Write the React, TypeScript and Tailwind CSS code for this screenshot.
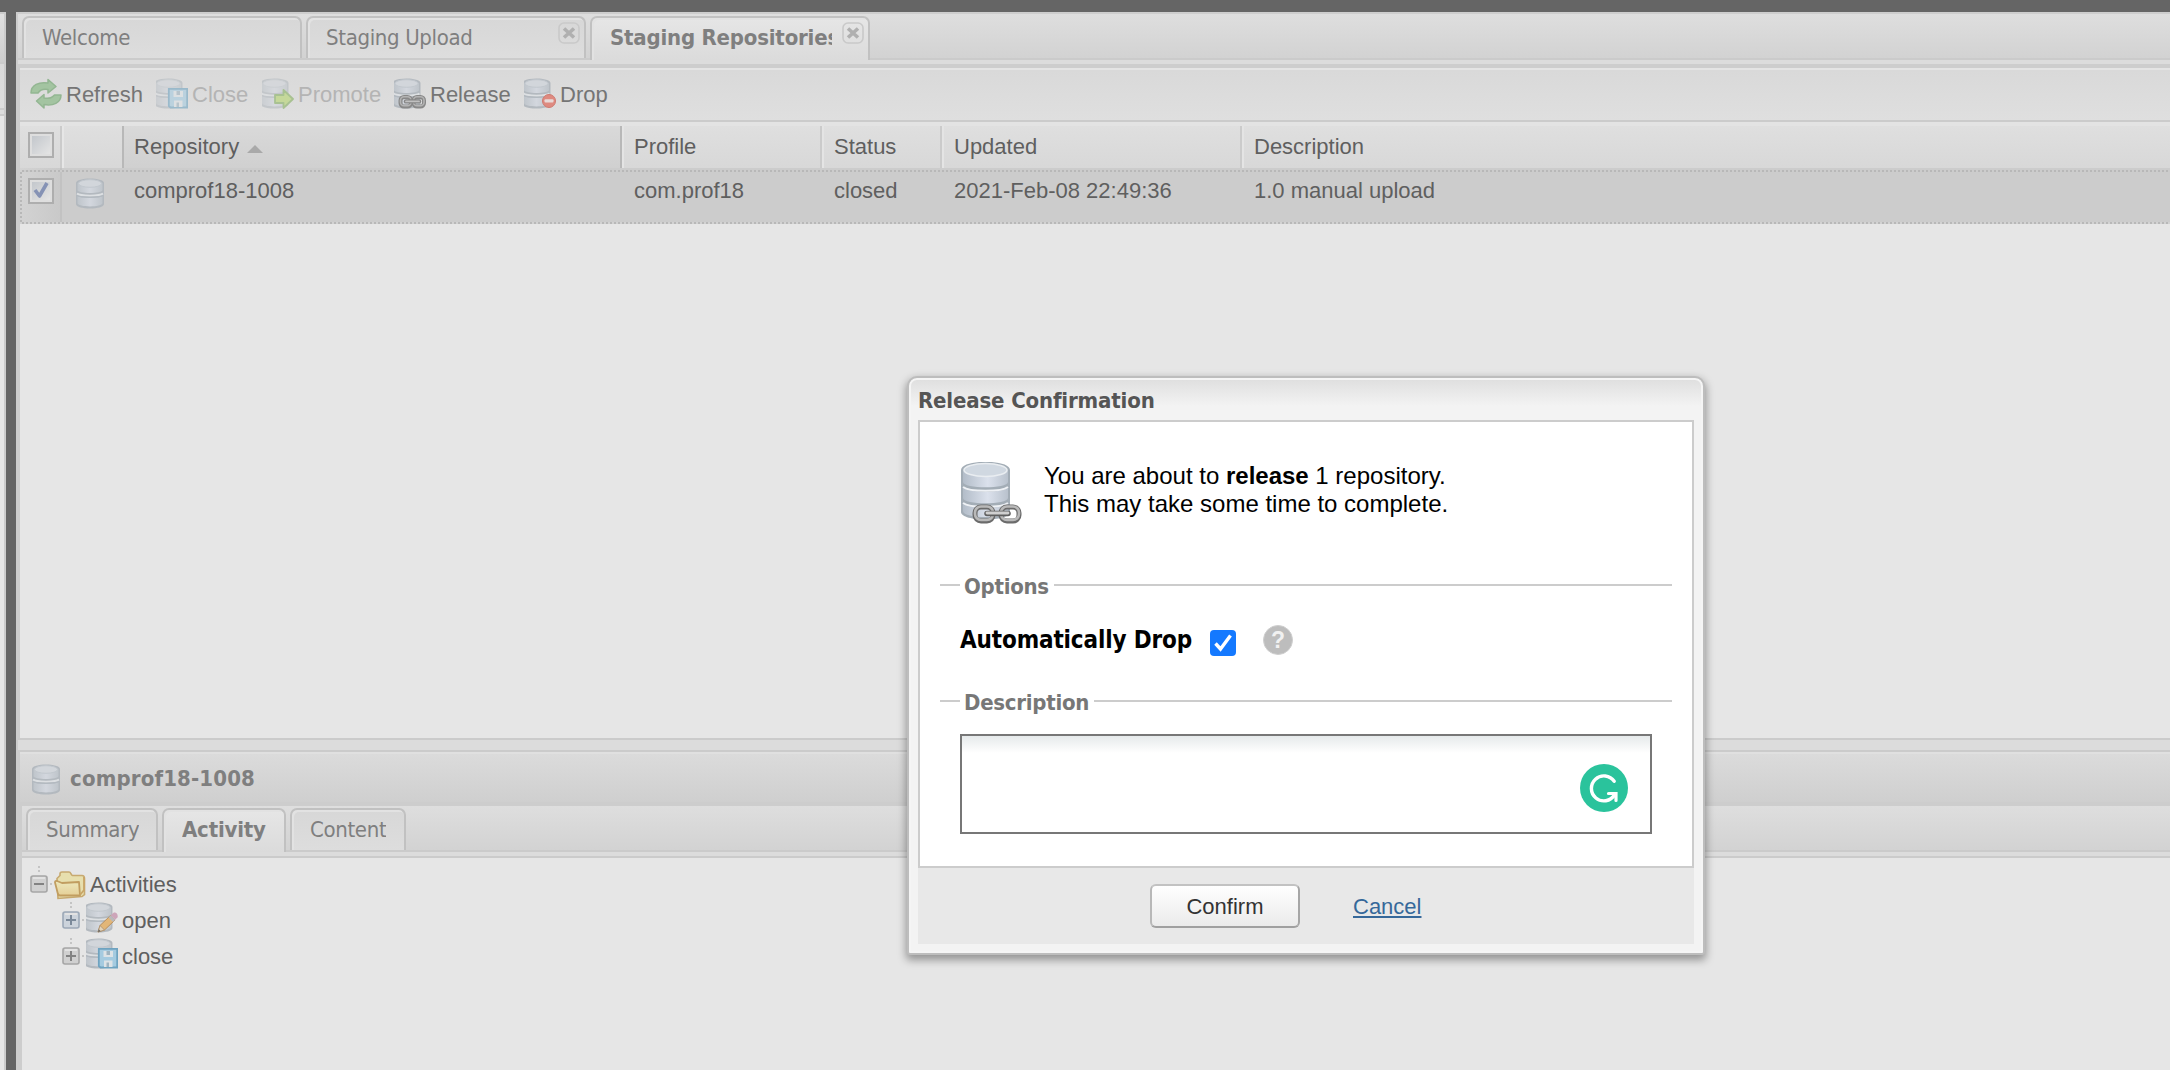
import type { ReactNode } from 'react';

const TAHOMA = "font-['DejaVu_Sans_Condensed','DejaVu_Sans',sans-serif]";

/* Two-disc database cylinder, drawn on a 32 unit grid. */
function Cylinder({ x = 0 }: { x?: number }) {
  return (
    <g transform={`translate(${x} 0)`}>
      <path d="M0 5C0 -1 28 -1 28 5V26C28 32 0 32 0 26Z" fill="#b3b9bf" />
      <path d="M1.5 5.5C1.5 2 26.5 2 26.5 5.5V12C26.5 16 1.5 16 1.5 12Z" fill="url(#disc)" />
      <path d="M1.5 18C4 20.500 24 20.500 26.500 18V25C26.500 29.500 1.500 29.500 1.500 25Z" fill="url(#disc)" />
      <ellipse cx="14" cy="5.500" rx="11.500" ry="3.800" fill="#d2d6db" stroke="#c2c8ce" strokeWidth="1" />
      <path d="M1 15.500C4 18.200 24 18.200 27 15.500" fill="none" stroke="#dde0e3" strokeWidth="1.800" />
      <path d="M1 17.500C4 20 24 20 27 17.500" fill="none" stroke="#b3bac1" strokeWidth="1" />
    </g>
  );
}

function Icon({ children, className = '' }: { children: ReactNode; className?: string }) {
  return (
    <svg viewBox="0 0 32 32" className={`h-8 w-8 shrink-0 ${className}`}>
      {children}
    </svg>
  );
}

function Defs() {
  return (
    <svg className="absolute h-0 w-0">
      <defs>
        <linearGradient id="disc" x1="0" x2="1" y1="0" y2="0">
          <stop offset="0" stopColor="#bfc5cb" />
          <stop offset="0.5" stopColor="#d3d7de" />
          <stop offset="1" stopColor="#bfc5cb" />
        </linearGradient>
        <linearGradient id="discBright" x1="0" x2="1" y1="0" y2="0">
          <stop offset="0" stopColor="#b3bdc9" />
          <stop offset="0.55" stopColor="#dbe1ec" />
          <stop offset="1" stopColor="#b9c2cd" />
        </linearGradient>
        <linearGradient id="folder" x1="0" x2="0" y1="0" y2="1">
          <stop offset="0" stopColor="#ece8bd" />
          <stop offset="1" stopColor="#e5cf97" />
        </linearGradient>
      </defs>
    </svg>
  );
}

const DbIcon = ({ className = '' }: { className?: string }) => (
  <Icon className={className}>
    <Cylinder x={2} />
  </Icon>
);

const RefreshIcon = () => (
  <Icon>
    <g fill="#a3c4a1" stroke="#93b692" strokeWidth="1.500" strokeLinejoin="round">
      <path d="M1 15C1 7 9 3.500 18 5V1.500L26 8.500L18 15V11.500C13 10.500 10 12 8 15Z" />
      <path d="M31 17C31 25 23 28 14 26.500V30L6.500 23L14 16.500V20C19 21 22 20 24.500 17Z" />
    </g>
  </Icon>
);

const DbDisk = ({ className = '' }: { className?: string }) => (
  <Icon className={className}>
    <Cylinder x={-1.500} />
    <path d="M12.800 10.800H31.200V29.500H14.500L12.800 28Z" fill="#a5cbe0" stroke="#6fa3c0" strokeWidth="1.800" />
    <path d="M17.500 13H27V19H17.500Z" fill="#dde3e6" />
    <path d="M18 22.500H26.500V29H18Z" fill="#dde3e6" />
    <path d="M20.500 13H24V17H20.500ZM20.500 24.500H23V29H20.500Z" fill="#9fb4c0" />
  </Icon>
);

const DbPromote = ({ className = '' }: { className?: string }) => (
  <Icon className={className}>
    <Cylinder x={-1.500} />
    <path d="M13 17H21.500V12L31 21L21.500 30V25H13Z" fill="#b6d66f" stroke="#86b061" strokeWidth="1.800" strokeLinejoin="round" />
  </Icon>
);

const DbLink = () => (
  <Icon>
    <Cylinder x={-1.500} />
    <g fill="none">
      <rect x="6.500" y="19" width="10.500" height="9.500" rx="3.500" stroke="#888888" strokeWidth="4" />
      <rect x="19.500" y="19" width="10.500" height="9.500" rx="3.500" stroke="#888888" strokeWidth="4" />
      <rect x="6.500" y="18.700" width="10.500" height="9" rx="3.500" stroke="#b3b3b3" strokeWidth="1.600" />
      <rect x="19.500" y="18.700" width="10.500" height="9" rx="3.500" stroke="#b3b3b3" strokeWidth="1.600" />
      <path d="M12 23.400H25" stroke="#858585" strokeWidth="4.400" strokeLinecap="round" />
      <path d="M12 23.400H25" stroke="#c0c0c0" strokeWidth="1.800" strokeLinecap="round" />
    </g>
  </Icon>
);

const DbDrop = () => (
  <Icon>
    <Cylinder x={-1.500} />
    <circle cx="25" cy="23" r="6.500" fill="#de8a80" stroke="#cf7a70" />
    <rect x="20.500" y="21.300" width="9" height="3.200" rx="1" fill="#e8dad8" />
  </Icon>
);

const DbEdit = ({ className = '' }: { className?: string }) => (
  <Icon className={className}>
    <Cylinder x={-1.500} />
    <path d="M12 30L14 23.500L24.500 13.500L29 18L18.500 28Z" fill="#e2b678" stroke="#b78f5e" strokeWidth="1" />
    <path d="M12 30L14 23.500L18.500 28Z" fill="#e3d3b8" stroke="#a98f70" strokeWidth="0.800" />
    <path d="M12 30L12.800 27.300L14.700 29.200Z" fill="#666" />
    <path d="M22.500 15.400L24.800 13.200L29.300 17.700L27 19.900Z" fill="#b9b9bb" />
    <path d="M24.800 13.200L27.500 10.800C30 9.500 32.500 12.500 31.500 15.200L29.300 17.700Z" fill="#cda5b9" />
  </Icon>
);

const FolderIcon = () => (
  <Icon className="mt-[3px]">
    <path d="M4 28L3 8L6 5V3.500C6 2 7 1.500 8 1.500H15C17 1.500 17 5 18.500 5H28C30 5 30.500 6 30.500 8V24L28 26Z" transform="translate(0 0.500)" fill="#e7dfae" stroke="#c7a970" strokeWidth="1.600" />
    <path d="M1 12.500C1 11 2 10.800 3 11L8 13L25 12L26 25.500H6C4.500 25.500 4 24.500 3.700 23Z" fill="url(#folder)" stroke="#c19d60" strokeWidth="1.800" strokeLinejoin="round" />
    <path d="M26 25L30 20V7" fill="none" stroke="#c9a566" strokeWidth="1.800" />
  </Icon>
);

function Expander({ open = false, blue = false }: { open?: boolean; blue?: boolean }) {
  const c = blue ? '#7b8999' : '#828282';
  return (
    <svg viewBox="0 0 18 18" className="h-[18px] w-[18px] shrink-0">
      <rect x="1" y="1" width="16" height="16" rx="2" fill={blue ? '#ccd3db' : '#d0d0d0'} stroke={blue ? '#9ca8b7' : '#a6a6a6'} strokeWidth="1.600" />
      <path d="M3 3H15" stroke="#e2e2e2" strokeWidth="2" />
      <path d="M4 9H14" stroke={c} strokeWidth="2" />
      {!open && <path d="M9 4V14" stroke={c} strokeWidth="2" />}
    </svg>
  );
}

function Checkbox({ checked = false }: { checked?: boolean }) {
  return (
    <div className="flex h-[26px] w-[26px] items-center justify-center border-2 border-[#aeaeae] bg-[#dedede]">
      <svg viewBox="0 0 18 18" className="h-[18px] w-[18px] bg-linear-to-br from-[#c3c7cc] to-[#e4e4e4]">
        {checked && <path d="M3 8L7.500 14L15 1" fill="none" stroke="#8592b5" strokeWidth="3.600" strokeLinejoin="round" />}
      </svg>
    </div>
  );
}

function CloseX() {
  return (
    <svg viewBox="0 0 22 22" className="absolute top-[4px] right-[4px] h-[22px] w-[22px]">
      <rect x="1" y="1" width="20" height="20" rx="5" fill="none" stroke="#c9c9c9" strokeWidth="1.600" />
      <path d="M6 6.500L16 15.500M16 6.500L6 15.500" stroke="#b0b0b0" strokeWidth="3.600" />
    </svg>
  );
}

function Tab({ label, width, active, closable, clip = '' }: { label: string; width: string; active?: boolean; closable?: boolean; clip?: string }) {
  return (
    <div
      className={`relative flex items-start rounded-t-[7px] border-2 border-b-0 border-[#c1c1c1] pl-[18px] text-[22px] text-[#7f7f7f] shadow-[inset_2px_2px_0_#e2e2e2] ${TAHOMA} ${width} ${
        active ? 'h-[44px] bg-linear-to-b from-[#e6e6e6] to-[#dbdbdb] font-bold tracking-[-0.2px]' : 'h-[42px] bg-linear-to-b from-[#d7d7d7] to-[#dddddd] tracking-[-0.34px]'
      }`}
    >
      <span className={`mt-px h-[38px] overflow-hidden whitespace-nowrap leading-[38px] ${clip}`}>{label}</span>
      {closable && <CloseX />}
    </div>
  );
}

function ToolButton({ icon, label, width, disabled }: { icon: ReactNode; label: string; width: string; disabled?: boolean }) {
  return (
    <div className={`flex items-center gap-1 ${width} ${disabled ? 'text-[#b4b4b4]' : 'text-[#757575]'}`}>
      {icon}
      <span>{label}</span>
    </div>
  );
}

const columns = [
  { title: 'Profile', value: 'com.prof18', width: 'w-[200px]' },
  { title: 'Status', value: 'closed', width: 'w-[120px]' },
  { title: 'Updated', value: '2021-Feb-08 22:49:36', width: 'w-[300px]' },
  { title: 'Description', value: '1.0 manual upload', width: 'flex-1' },
];

function Grid() {
  return (
    <div className="flex flex-1 flex-col bg-[#e6e6e6] text-[22px] text-[#5f5f5f]">
      <div className="flex h-[46px] shrink-0 border-t-4 border-[#e3e3e3] bg-linear-to-b from-[#dfdfdf] to-[#d8d8d8]">
        <div className="w-[42px] border-r-2 border-[#cbcbcb] pt-[6px] pl-2">
          <Checkbox />
        </div>
        <div className="w-[62px] border-r-2 border-l-2 border-r-[#b8b8b8] border-l-[#e6e6e6]" />
        <div className="flex w-[498px] items-center gap-2 border-r-2 border-[#b8b8b8] bg-linear-to-b from-[#d9d9d9] to-[#d0d0d0] pb-px pl-[10px]">
          <span>Repository</span>
          <svg viewBox="0 0 16 8" className="mt-1 h-2 w-4">
            <path d="M0 8L8 0L16 8Z" fill="#a9a9a9" />
          </svg>
        </div>
        {columns.map((c) => (
          <div key={c.title} className={`flex items-center border-r-2 border-l-2 border-r-[#cbcbcb] border-l-[#e4e4e4] pb-px pl-[10px] last:border-r-0 ${c.width}`}>
            {c.title}
          </div>
        ))}
      </div>
      <div className="relative flex h-[56px] shrink-0 bg-[#cccccc]">
        <div className="w-[42px] border-r-2 border-[#c2c2c2] bg-linear-to-r from-[#d3d3d3] to-[#c9c9c9] pt-[10px] pl-2">
          <Checkbox checked />
        </div>
        <div className="w-[62px] pt-[10px] pl-3">
          <DbIcon />
        </div>
        <div className="w-[500px] pt-[5px] pl-[10px] leading-[36px]">comprof18-1008</div>
        {columns.map((c) => (
          <div key={c.title} className={`pt-[5px] pl-[10px] leading-[36px] ${c.width}`}>
            {c.value}
          </div>
        ))}
        <div className="absolute inset-x-0 top-[2px] h-[2px] bg-[repeating-linear-gradient(90deg,#cccccc_0_2px,#b8b8b8_2px_4px)]" />
        <div className="absolute inset-x-0 bottom-0 h-[2px] bg-[repeating-linear-gradient(90deg,#d2d2d2_0_2px,#b8b8b8_2px_4px)]" />
        <div className="absolute inset-y-[2px] left-0 w-[2px] bg-[repeating-linear-gradient(180deg,#d2d2d2_0_2px,#b8b8b8_2px_4px)]" />
      </div>
    </div>
  );
}

function TreeRow({ indent, expander, icon, label }: { indent: string; expander: ReactNode; icon: ReactNode; label: string }) {
  return (
    <div className={`flex h-9 items-center ${indent}`}>
      <div className="relative flex">
        <div className="absolute top-[-9px] left-2 h-[7px] w-[2px] bg-[repeating-linear-gradient(180deg,#c4c4c4_0_2px,transparent_2px_4px)]" />
        {expander}
        <div className="absolute top-2 left-[20px] h-[2px] w-[2px] bg-[#c4c4c4]" />
      </div>
      <div className="ml-[6px]">{icon}</div>
      <span className="ml-[4px]">{label}</span>
    </div>
  );
}

function DetailPanel() {
  return (
    <div className="flex h-[320px] shrink-0 flex-col border-t-2 border-[#cbcbcb]">
      <div className="flex h-[50px] shrink-0 items-center border-t-2 border-[#e0e0e0] bg-linear-to-b from-[#dbdbdb] to-[#cfcfcf] pl-[10px]">
        <DbIcon className="mt-[3px]" />
        <span className={`ml-2 text-[22px] font-bold tracking-[0.15px] text-[#7f7f7f] ${TAHOMA}`}>comprof18-1008</span>
      </div>
      <div className="flex flex-1 flex-col border-t-4 border-l-2 border-[#cdcdcd]">
        <div className="flex h-[46px] shrink-0 items-start gap-1 bg-linear-to-b from-[#dedede] to-[#d2d2d2] pt-[2px] pl-1 shadow-[inset_0_-2px_0_#cbcbcb]">
          <Tab label="Summary" width="w-[132px]" />
          <Tab label="Activity" width="w-[124px]" active />
          <Tab label="Content" width="w-[116px]" />
        </div>
        <div className="h-[6px] shrink-0 border-b-2 border-[#cbcbcb] bg-[#dcdcdc]" />
        <div className="flex-1 bg-[#e6e6e6] pt-[8px] pl-2 text-[22px] text-[#5f5f5f]">
          <TreeRow indent="" expander={<Expander open />} icon={<FolderIcon />} label="Activities" />
          <TreeRow indent="pl-8" expander={<Expander blue />} icon={<DbEdit className="mb-1" />} label="open" />
          <TreeRow indent="pl-8" expander={<Expander />} icon={<DbDisk className="mb-1" />} label="close" />
        </div>
      </div>
    </div>
  );
}

function ReleaseIcon() {
  return (
    <svg viewBox="0 0 62 64" className="h-16 w-[62px] shrink-0">
      <path d="M0 8C0 -3 49 -3 49 8V50C49 60 0 60 0 50Z" fill="#a3adb6" />
      <path d="M2 9C2 3 47 3 47 9V20C47 27 2 27 2 20Z" fill="url(#discBright)" />
      <path d="M2 26C8 31 41 31 47 26V36C47 43 2 43 2 36Z" fill="url(#discBright)" />
      <path d="M2 42C8 47 41 47 47 42V49C47 57 2 57 2 49Z" fill="url(#discBright)" />
      <ellipse cx="24.500" cy="8" rx="21.500" ry="6.500" fill="#d0d8e1" stroke="#e9edf1" strokeWidth="1.600" />
      <path d="M2 25C8 30 41 30 47 25M2 41C8 46 41 46 47 41" fill="none" stroke="#eef1f5" strokeWidth="1.800" />
      <g fill="none">
        <rect x="14" y="45" width="18" height="14" rx="6" stroke="#6b6b6b" strokeWidth="5" />
        <rect x="40" y="45" width="18" height="14" rx="6" stroke="#6b6b6b" strokeWidth="5" />
        <rect x="14" y="44.500" width="18" height="13.500" rx="6" stroke="#b9b9b9" strokeWidth="2.600" />
        <rect x="40" y="44.500" width="18" height="13.500" rx="6" stroke="#b9b9b9" strokeWidth="2.600" />
        <path d="M26 51.500H47" stroke="#5f5f5f" strokeWidth="5.500" strokeLinecap="round" />
        <path d="M26 51H47" stroke="#d0d0d0" strokeWidth="2.800" strokeLinecap="round" />
      </g>
    </svg>
  );
}

function Legend({ children }: { children: ReactNode }) {
  return (
    <div className="flex h-[30px] items-center">
      <div className="h-[2px] w-5 bg-[#cccccc]" />
      <span className={`mt-1 pr-[5px] pl-1 text-[22px] leading-[30px] font-bold tracking-[-0.27px] text-[#777777] ${TAHOMA}`}>{children}</span>
      <div className="h-[2px] flex-1 bg-[#cccccc]" />
    </div>
  );
}

function ReleaseDialog() {
  return (
    <div className="absolute top-[376px] left-[907px] flex h-[579px] w-[798px] flex-col rounded-t-[10px] rounded-b-[3px] border-2 border-[#bdbdbd] bg-[#f3f3f3] bg-[linear-gradient(180deg,#dedede_0px,#f3f3f3_28px)] px-[9px] shadow-[0_4px_8px_1px_rgba(0,0,0,0.36),inset_0_0_0_2px_#f5f5f5]">
      <div className={`h-[42px] shrink-0 text-[22px] leading-[46px] font-bold tracking-[-0.15px] text-[#555555] ${TAHOMA}`}>Release Confirmation</div>
      <div className="flex h-[448px] shrink-0 flex-col border-2 border-[#cccccc] bg-white px-5">
        <div className="mt-10 flex pl-[21px]">
          <ReleaseIcon />
          <div className="ml-[21px] text-[24px] leading-[28px] text-black">
            <p>
              You are about to <b>release</b> 1 repository.
            </p>
            <p>This may take some time to complete.</p>
          </div>
        </div>
        <div className="mt-[44px]">
          <Legend>Options</Legend>
        </div>
        <div className="mt-[24px] flex h-8 items-center pl-5">
          <span className={`w-[250px] text-[24px] font-bold tracking-[-0.15px] text-black ${TAHOMA}`}>Automatically Drop</span>
          <svg viewBox="0 0 26 26" className="mt-[6px] h-[26px] w-[26px]">
            <rect width="26" height="26" rx="4" fill="#1479ff" />
            <path d="M5.500 13.500L10.500 19L20.500 5.500" fill="none" stroke="#fff" strokeWidth="3.400" />
          </svg>
          <div className="ml-[27px] flex h-[30px] w-[30px] items-center justify-center rounded-full border border-[#cfcfcf] bg-[#bdbdbd] text-[23px] leading-none font-bold text-[#f1f1f1]">?</div>
        </div>
        <div className="mt-[30px]">
          <Legend>Description</Legend>
        </div>
        <div className="mx-5 mt-[18px] flex h-[100px] items-center justify-end border-2 border-[#777777] bg-[linear-gradient(180deg,#e6eaeb_0px,#ffffff_17px)] pr-[22px]">
          <svg viewBox="0 0 48 48" className="mt-2 h-12 w-12">
            <circle cx="24" cy="24" r="24" fill="#2ac39c" />
            <path d="M34.200 17.300A12.500 12.500 0 1 0 34.500 31" fill="none" stroke="#fff" strokeWidth="3.400" strokeLinecap="round" />
            <path d="M28.500 29.500H36V36.500" fill="none" stroke="#fff" strokeWidth="3.200" strokeLinecap="round" />
          </svg>
        </div>
      </div>
      <div className="flex h-[76px] shrink-0 items-start bg-[#e8e8e8] pt-4 pl-[232px] text-[22px]">
        <div className="flex h-[44px] w-[150px] items-center justify-center rounded-[6px] border-2 border-t-[#c2c2c2] border-r-[#a6a6a6] border-b-[#a0a0a0] border-l-[#b8b8b8] bg-linear-to-b from-white to-[#ebebeb] text-[#333333]">Confirm</div>
        <span className="ml-[53px] leading-[46px] text-[#36689a] underline decoration-2 underline-offset-[2px]">Cancel</span>
      </div>
    </div>
  );
}

export default function App() {
  return (
    <div className="relative flex h-[1070px] w-[2170px] gap-[10px] overflow-hidden bg-[#656565] pt-3 font-['Liberation_Sans',Arial,sans-serif]">
      <Defs />
      <div className="flex w-[6px] shrink-0 flex-col border-t-2 border-r-2 border-[#cbcbcb] bg-[#e6e6e6]">
        <div className="h-[50px] border-b-2 border-[#cbcbcb] bg-linear-to-b from-[#e0e0e0] to-[#cecece]" />
        <div className="h-[46px] border-b-2 border-[#cbcbcb] bg-linear-to-b from-[#dadada] to-[#dddddd]" />
        <div className="h-[6px] border-b-2 border-[#cbcbcb] bg-[#dcdcdc]" />
      </div>
      <div className="flex min-w-0 flex-1 flex-col border-t-2 border-l-2 border-[#cdcdcd]">
        <div className="flex h-[46px] shrink-0 items-start gap-1 bg-linear-to-b from-[#dedede] to-[#d2d2d2] pt-[2px] pl-1 shadow-[inset_0_-2px_0_#cbcbcb]">
          <Tab label="Welcome" width="w-[280px]" />
          <Tab label="Staging Upload" width="w-[280px]" closable />
          <Tab label="Staging Repositories" width="w-[280px]" active closable clip="w-[222px]" />
        </div>
        <div className="h-1 shrink-0 bg-[#dcdcdc]" />
        <div className="flex min-h-0 flex-1 flex-col border-t-4 border-l-2 border-[#cdcdcd]">
          <div className="flex h-[54px] shrink-0 items-center border-t-2 border-b-2 border-t-[#e4e4e4] border-b-[#cbcbcb] bg-linear-to-b from-[#d9d9d9] to-[#dfdfdf] pb-[2px] pl-[10px] text-[22px]">
            <ToolButton icon={<RefreshIcon />} label="Refresh" width="w-[126px]" />
            <ToolButton icon={<DbDisk className="opacity-60" />} label="Close" width="w-[106px]" disabled />
            <ToolButton icon={<DbPromote className="opacity-60" />} label="Promote" width="w-[132px]" disabled />
            <ToolButton icon={<DbLink />} label="Release" width="w-[130px]" />
            <ToolButton icon={<DbDrop />} label="Drop" width="w-[100px]" />
          </div>
          <Grid />
          <div className="-ml-[2px] h-3 shrink-0 border-t-2 border-[#cbcbcb] bg-[#dcdcdc]" />
          <DetailPanel />
        </div>
      </div>
      <ReleaseDialog />
    </div>
  );
}
